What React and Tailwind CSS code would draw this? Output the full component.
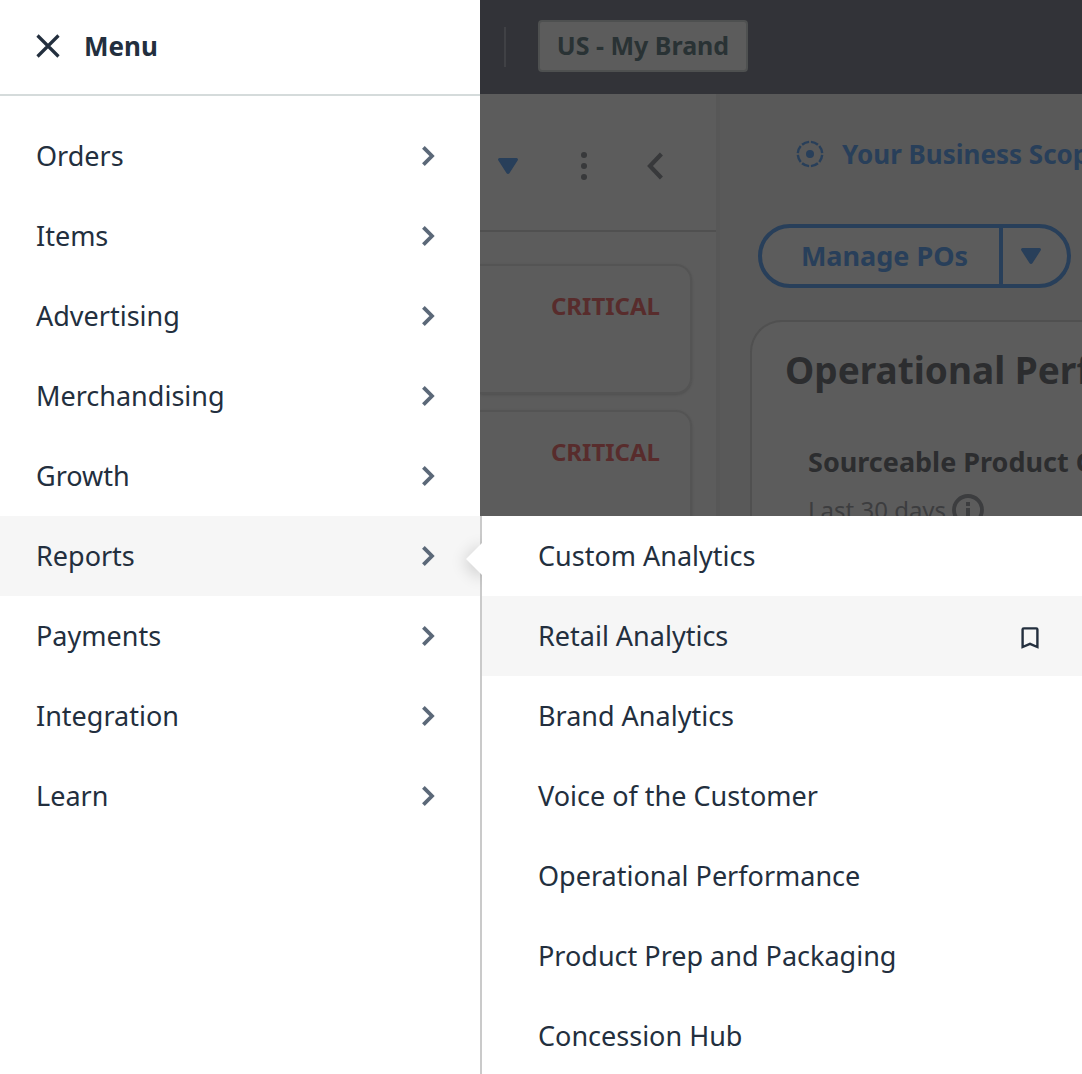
import React from "react";

const menuItems = [
  "Orders",
  "Items",
  "Advertising",
  "Merchandising",
  "Growth",
  "Reports",
  "Payments",
  "Integration",
  "Learn",
];

const reportItems = [
  "Custom Analytics",
  "Retail Analytics",
  "Brand Analytics",
  "Voice of the Customer",
  "Operational Performance",
  "Product Prep and Packaging",
  "Concession Hub",
];

function CloseIcon() {
  return (
    <svg viewBox="0 0 24 24" className="size-6" fill="none" stroke="currentColor" strokeWidth="3.2" aria-hidden="true">
      <path d="M1.5 1.5 22.5 22.5M22.5 1.5 1.5 22.5" />
    </svg>
  );
}

function ChevronRight() {
  return (
    <svg viewBox="0 0 14 20" className="h-5 w-[14px] text-[#5b6878]" fill="none" stroke="currentColor" strokeWidth="3.8" aria-hidden="true">
      <path d="M2.4 1.4 11 10 2.4 18.6" />
    </svg>
  );
}

function ChevronLeft() {
  return (
    <svg viewBox="0 0 16 28" className="h-7 w-4" fill="none" stroke="currentColor" strokeWidth="4.2" aria-hidden="true">
      <path d="M14.4 2 3 14 14.4 26" />
    </svg>
  );
}

function CaretDown() {
  return (
    <svg viewBox="0 0 20 16" className="h-4 w-5" fill="currentColor" aria-hidden="true">
      <path d="M1.6 0h16.8c1.4 0 2 1.500 1.200 2.600L11.400 15.200c-.7 1-2.100 1-2.800 0L.4 2.600C-.4 1.500.2 0 1.600 0Z" />
    </svg>
  );
}

function KebabIcon() {
  return (
    <svg viewBox="0 0 6 28" className="h-7 w-1.5" fill="currentColor" aria-hidden="true">
      <circle cx="3" cy="3" r="3" />
      <circle cx="3" cy="14" r="3" />
      <circle cx="3" cy="25" r="3" />
    </svg>
  );
}

function ScopeIcon() {
  return (
    <svg viewBox="0 0 28 28" className="size-7 shrink-0" fill="none" stroke="currentColor" aria-hidden="true">
      <circle cx="14" cy="14" r="12.2" strokeWidth="2.4" pathLength="80" strokeDasharray="8 2" strokeDashoffset="-1" />
      <circle cx="14" cy="14" r="4" fill="currentColor" stroke="none" />
    </svg>
  );
}

function InfoIcon() {
  return (
    <svg viewBox="0 0 32 32" className="size-8" fill="none" stroke="currentColor" aria-hidden="true">
      <circle cx="16" cy="16" r="14" strokeWidth="3.8" />
      <path d="M16 8v4M16 14v10" strokeWidth="4" />
    </svg>
  );
}

function BookmarkIcon() {
  return (
    <svg viewBox="0 0 18 22" className="h-[22px] w-[18px]" fill="none" stroke="currentColor" strokeWidth="2.4" aria-hidden="true">
      <path d="M1.600 20V2.600q0-1.200 1.200-1.200h12.400q1.200 0 1.200 1.200V20L9 16.800Z" />
    </svg>
  );
}

function AlertCard() {
  return (
    <article className="flex h-[130px] shrink-0 justify-end rounded-r-2xl border-2 border-l-0 border-[#545454] px-[30px] pt-6 shadow-sm">
      <span className="text-2xl leading-8 font-bold text-[#582c2c]">CRITICAL</span>
    </article>
  );
}

function DimmedPage() {
  return (
    <div className="flex h-[516px] shrink-0 flex-col overflow-hidden bg-[#5c5c5c]">
      <header className="flex h-[94px] shrink-0 items-center bg-[#323338] pl-6">
        <div className="h-10 w-0.5 bg-[#404145]" />
        <button
          type="button"
          className="ml-8 mb-0.5 flex h-[52px] w-[210px] items-center justify-center rounded-sm border-2 border-[#4e5050] bg-[#5c5c5c] text-[25px] font-bold whitespace-nowrap text-[#293234]"
        >
          US - My Brand
        </button>
      </header>
      <div className="flex min-h-0 flex-1">
        <section className="flex w-60 shrink-0 flex-col border-r-4 border-[#575757]">
          <div className="flex h-[138px] shrink-0 items-center border-b-2 border-[#505050] pt-2 pl-[18px]">
            <button type="button" aria-label="Filter" className="text-[#283f5a]">
              <CaretDown />
            </button>
            <button type="button" aria-label="More options" className="ml-[63px] text-[#38393b]">
              <KebabIcon />
            </button>
            <button type="button" aria-label="Collapse" className="ml-[60px] text-[#38393b]">
              <ChevronLeft />
            </button>
          </div>
          <div className="flex flex-col gap-4 pt-8 pr-6">
            <AlertCard />
            <AlertCard />
          </div>
        </section>
        <main className="flex min-w-0 flex-1 flex-col bg-[#595959] pl-[30px]">
          <a href="#scope" className="mt-10 flex h-10 shrink-0 items-center gap-[18px] pl-[46px] text-[26px] font-bold whitespace-nowrap text-[#283f5a]">
            <ScopeIcon />
            Your Business Scope
          </a>
          <div className="mt-[50px] ml-2 flex h-16 w-[313px] shrink-0 rounded-full border-4 border-[#283f5a] bg-[#5c5c5c] text-[#283f5a]">
            <button type="button" className="flex-1 pl-2 text-[27px] font-bold whitespace-nowrap">
              Manage POs
            </button>
            <button type="button" aria-label="More actions" className="flex w-[68px] items-center border-l-4 border-[#283f5a] pl-[18px]">
              <CaretDown />
            </button>
          </div>
          <section className="mt-8 h-[300px] shrink-0 rounded-tl-[32px] border-2 border-r-0 border-[#505050] bg-[#5c5c5c] whitespace-nowrap">
            <h1 className="mt-[22px] pl-[33px] text-[37px] leading-[52px] font-bold text-[#2c2d2f]">Operational Performance</h1>
            <div className="mt-[46px] pl-14">
              <h2 className="text-[27px] leading-10 font-bold text-[#2c2d2f]">Sourceable Product OOS</h2>
              <div className="mt-2 flex items-center gap-1.5 text-[#3c3d3f]">
                <span className="text-2xl leading-10 font-normal">Last 30 days</span>
                <InfoIcon />
              </div>
            </div>
          </section>
        </main>
      </div>
    </div>
  );
}

function MenuPanel() {
  return (
    <aside className="w-[480px] shrink-0 bg-white">
      <header className="flex h-24 items-center gap-6 border-b-2 border-[#d5dbdb] pl-9 pb-0.5">
        <button type="button" aria-label="Close menu">
          <CloseIcon />
        </button>
        <h2 className="text-[26px] font-bold">Menu</h2>
      </header>
      <nav aria-label="Menu" className="pt-5">
        <ul>
          {menuItems.map((item) => (
            <li key={item}>
              <button
                type="button"
                className={
                  item === "Reports"
                    ? "flex h-20 w-full items-center justify-between bg-[#f6f6f6] pr-[45px] pl-9"
                    : "flex h-20 w-full items-center justify-between pr-[45px] pl-9"
                }
              >
                {item}
                <ChevronRight />
              </button>
            </li>
          ))}
        </ul>
      </nav>
    </aside>
  );
}

function ReportsMenu() {
  return (
    <nav aria-label="Reports" className="relative flex-1 border-l-2 border-[#cacaca] bg-white">
      <div className="absolute top-3 -left-10 h-16 w-10 overflow-hidden" aria-hidden="true">
        <div className="absolute top-[19px] left-[29px] size-6 rotate-45 bg-white shadow-[0_4px_16px_rgba(0,0,0,0.16)]" />
      </div>
      <ul>
        {reportItems.map((item) => (
          <li
            key={item}
            className={
              item === "Retail Analytics"
                ? "flex h-20 items-center justify-between bg-[#f6f6f6] pr-[43px] pl-14"
                : "flex h-20 items-center pl-14"
            }
          >
            <a href="#reports">{item}</a>
            {item === "Retail Analytics" && (
              <button type="button" aria-label="Bookmark Retail Analytics" className="pt-1">
                <BookmarkIcon />
              </button>
            )}
          </li>
        ))}
      </ul>
    </nav>
  );
}

export default function App() {
  return (
    <div className="flex h-screen overflow-hidden bg-white font-['Noto_Sans','Open_Sans',sans-serif] text-[27px] font-[450] text-[#232f3e]">
      <MenuPanel />
      <div className="flex min-w-0 flex-1 flex-col">
        <DimmedPage />
        <ReportsMenu />
      </div>
    </div>
  );
}
